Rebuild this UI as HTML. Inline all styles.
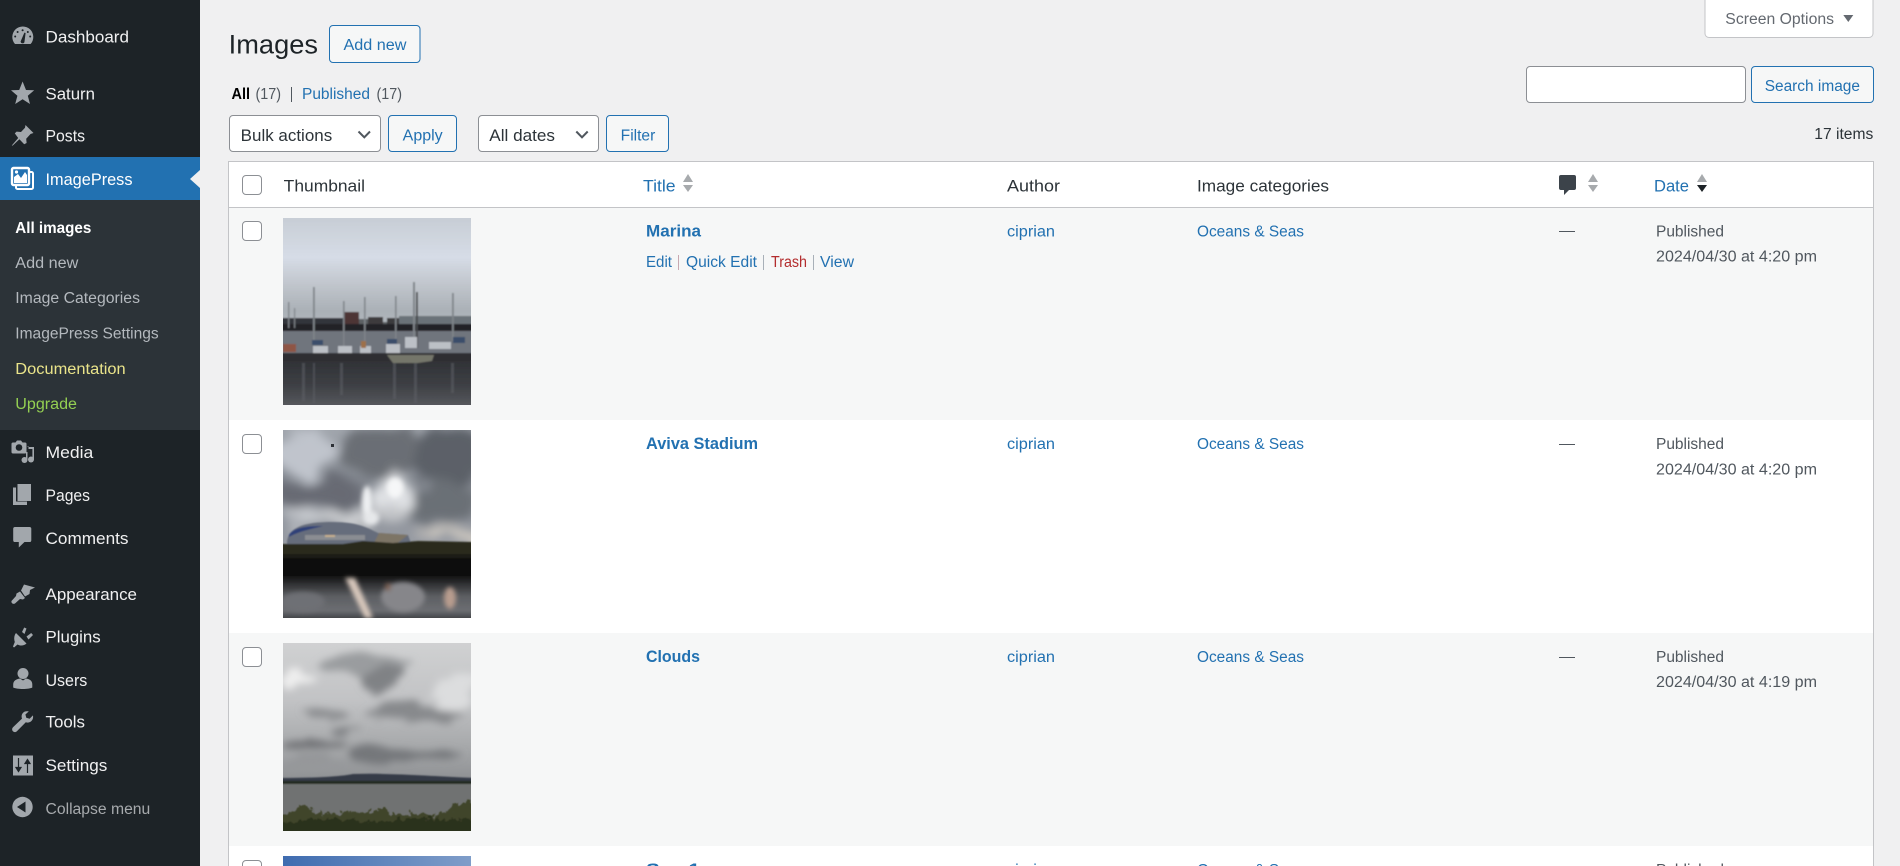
<!DOCTYPE html>
<html lang="en"><head><meta charset="utf-8"><title>Images</title>
<style>
html,body{margin:0;padding:0;width:1900px;height:866px;overflow:hidden;background:#f0f0f1}
svg{display:block;position:absolute;left:0;top:0}
text{font-family:"Liberation Sans",sans-serif;font-size:15.5px;white-space:pre}
.m{fill:#f0f0f1;font-size:16.5px}
.s{fill:#b4b9be;font-size:15.5px}
.l{fill:#2271b1}
.t{fill:#2c3338}
.g{fill:#50575e}
.h{font-size:16.5px}
.b{font-weight:bold}
.ti{fill:#2271b1;font-weight:bold;font-size:16.5px}
.i{fill:#a2a7ac}
</style></head><body>
<svg width="1900" height="866" viewBox="0 0 1900 866" xmlns="http://www.w3.org/2000/svg">
<defs>
<filter id="b1" x="-5%" y="-5%" width="110%" height="110%"><feGaussianBlur stdDeviation="0.8"/></filter>
<filter id="b3" x="-20%" y="-20%" width="140%" height="140%"><feGaussianBlur stdDeviation="2.5"/></filter>
<filter id="cl" x="-30%" y="-30%" width="160%" height="160%"><feTurbulence type="fractalNoise" baseFrequency="0.022 0.04" numOctaves="4" seed="7" result="n"/><feDisplacementMap in="SourceGraphic" in2="n" scale="38" xChannelSelector="R" yChannelSelector="G"/><feGaussianBlur stdDeviation="5"/></filter>
<filter id="cl2" x="-30%" y="-30%" width="160%" height="160%"><feTurbulence type="fractalNoise" baseFrequency="0.02 0.07" numOctaves="4" seed="3" result="n"/><feDisplacementMap in="SourceGraphic" in2="n" scale="26" xChannelSelector="R" yChannelSelector="G"/><feGaussianBlur stdDeviation="4"/></filter>
<filter id="bu" x="-5%" y="-20%" width="110%" height="140%"><feTurbulence type="fractalNoise" baseFrequency="0.16" numOctaves="3" seed="11" result="n"/><feDisplacementMap in="SourceGraphic" in2="n" scale="12" xChannelSelector="R" yChannelSelector="G"/><feGaussianBlur stdDeviation="0.6"/></filter>
<linearGradient id="sky1" x1="0" y1="0" x2="0" y2="1"><stop offset="0" stop-color="#c6ccd4"/><stop offset=".38" stop-color="#d6dce6"/><stop offset=".6" stop-color="#c2c7ce"/><stop offset=".85" stop-color="#aab0b6"/><stop offset="1" stop-color="#b4bac0"/></linearGradient>
<linearGradient id="wat1" x1="0" y1="0" x2="0" y2="1"><stop offset="0" stop-color="#303236"/><stop offset=".5" stop-color="#3d3f44"/><stop offset="1" stop-color="#5a5c60"/></linearGradient>
<linearGradient id="sky2" x1="0" y1="0" x2="0" y2="1"><stop offset="0" stop-color="#a0a5ac"/><stop offset=".4" stop-color="#858a92"/><stop offset="1" stop-color="#989ca4"/></linearGradient>
<linearGradient id="wat2" x1="0" y1="0" x2="0" y2="1"><stop offset="0" stop-color="#131314"/><stop offset=".45" stop-color="#5d5f63"/><stop offset=".75" stop-color="#6b6d71"/><stop offset="1" stop-color="#303135"/></linearGradient>
<linearGradient id="sky3" x1="0" y1="0" x2="0" y2="1"><stop offset="0" stop-color="#d0d1d2"/><stop offset=".4" stop-color="#c2c3c5"/><stop offset=".75" stop-color="#a5a7a9"/><stop offset="1" stop-color="#8b8d90"/></linearGradient>
<linearGradient id="blue" x1="0" y1="0" x2="1" y2="0"><stop offset="0" stop-color="#3f6cb0"/><stop offset="1" stop-color="#7f9dc9"/></linearGradient>
</defs>

<!-- sidebar -->
<rect x="0" y="0" width="200" height="866" fill="#1d2327"/>
<rect x="0" y="157" width="200" height="43" fill="#2271b1"/>
<rect x="0" y="200" width="200" height="230" fill="#2c3338"/>
<polygon points="200,170 190,179 200,188" fill="#f0f0f1"/>

<text class="m" x="45.5" y="42.5" textLength="83.5" lengthAdjust="spacingAndGlyphs">Dashboard</text>
<text class="m" x="45.5" y="99.5" textLength="49.5" lengthAdjust="spacingAndGlyphs">Saturn</text>
<text class="m" x="45.5" y="141.5" textLength="39.5" lengthAdjust="spacingAndGlyphs">Posts</text>
<text class="m" x="45.5" y="185" textLength="87" lengthAdjust="spacingAndGlyphs" style="fill:#fff">ImagePress</text>
<text class="s b" x="15.3" y="233" textLength="76" lengthAdjust="spacingAndGlyphs" style="fill:#fff">All images</text>
<text class="s" x="15.3" y="268" textLength="63" lengthAdjust="spacingAndGlyphs">Add new</text>
<text class="s" x="15.3" y="303" textLength="124.7" lengthAdjust="spacingAndGlyphs">Image Categories</text>
<text class="s" x="15.3" y="338.5" textLength="143.4" lengthAdjust="spacingAndGlyphs">ImagePress Settings</text>
<text class="s" x="15.3" y="374" textLength="110.4" lengthAdjust="spacingAndGlyphs" style="fill:#eae48a">Documentation</text>
<text class="s" x="15.3" y="409" textLength="61.7" lengthAdjust="spacingAndGlyphs" style="fill:#94cf52">Upgrade</text>
<text class="m" x="45.5" y="458" textLength="47.8" lengthAdjust="spacingAndGlyphs">Media</text>
<text class="m" x="45.5" y="501" textLength="44.5" lengthAdjust="spacingAndGlyphs">Pages</text>
<text class="m" x="45.5" y="544" textLength="83" lengthAdjust="spacingAndGlyphs">Comments</text>
<text class="m" x="45.5" y="600" textLength="91.5" lengthAdjust="spacingAndGlyphs">Appearance</text>
<text class="m" x="45.5" y="642.5" textLength="55.2" lengthAdjust="spacingAndGlyphs">Plugins</text>
<text class="m" x="45.5" y="686" textLength="41.8" lengthAdjust="spacingAndGlyphs">Users</text>
<text class="m" x="45.5" y="727.5" textLength="39.5" lengthAdjust="spacingAndGlyphs">Tools</text>
<text class="m" x="45.5" y="771" textLength="61.8" lengthAdjust="spacingAndGlyphs">Settings</text>
<text x="45.5" y="814" textLength="104.8" lengthAdjust="spacingAndGlyphs" style="fill:#a7aaad">Collapse menu</text>

<!-- sidebar icons -->
<path class="i" d="M15 44A10.5 10.5 0 1 1 30.6 44Z"/>
<g fill="#1d2327"><circle cx="22.6" cy="30.2" r="1"/><circle cx="17.6" cy="32" r="1"/><circle cx="27.8" cy="32" r="1"/><circle cx="15.2" cy="36.5" r="1"/><circle cx="30.2" cy="36.5" r="1"/><path d="M20.6 41.5L24.4 32.6 25.6 33 24.4 42.2A2 2 0 0 1 20.6 41.5Z"/></g>
<polygon class="i" points="22.6,81.5 26,90 34.2,90.2 27.8,95.7 30,104 22.6,99.2 15.2,104 17.4,95.7 11,90.2 19.2,90"/>
<path class="i" d="M25.5 125L33.5 133 30.5 134 26.2 138.7 26.6 143 24.2 144.2 19.4 139.2 13 145.3 11.8 146 12.4 144.8 18.2 138 14.8 133.4 16.6 131.6 21 132 25 127.8Z"/>
<rect x="16" y="172" width="17" height="17" rx="1.5" fill="none" stroke="#fff" stroke-width="2"/>
<rect x="12" y="168" width="17" height="17" rx="1.5" fill="#2271b1" stroke="#fff" stroke-width="2.4"/>
<path d="M14 183V177L18 174 21 178 25 172 27 175V183Z" fill="#fff"/><circle cx="16.5" cy="172" r="1.6" fill="#fff"/>

<path class="i" d="M13 442.5H15.5L17 440.5H21L22.5 442.5H25A1.5 1.5 0 0 1 26.5 444V452A1.5 1.5 0 0 1 25 453.5H13A1.5 1.5 0 0 1 11.5 452V444A1.5 1.5 0 0 1 13 442.5Z"/>
<circle cx="19" cy="447.5" r="3.3" fill="#1d2327"/>
<circle cx="24.5" cy="460" r="3" class="i"/><circle cx="31" cy="459.5" r="3" class="i"/>
<path d="M27 447H34V459.5H32.4V449H28.5V446Z M26 452H27.5V460H26Z" class="i"/>
<path class="i" d="M13 487.5H16V501.5H27V505H13Z"/>
<rect class="i" x="17.5" y="484" width="13.5" height="17"/>
<path class="i" d="M15 527H29.5A1.8 1.8 0 0 1 31.3 528.8V540.2A1.8 1.8 0 0 1 29.5 542H24.5L18.8 547.5V542H15A1.8 1.8 0 0 1 13.2 540.2V528.8A1.8 1.8 0 0 1 15 527Z"/>
<path class="i" d="M24 584.5L35 587.5 30 590 29.5 594 25 596.5 21 590.5ZM20 591.5L25 598 23 599.5 20 599 15 603.5C13 604.5 11 603 11.5 601L16 596 16.5 593.5Z"/>
<path class="i" d="M16 633L26.5 643.5C24 646 20 646 17.5 644.5L14 647.5 13 646.5 14.8 642C13.8 639 14 635.5 16 633ZM22 632L24.2 627.5 26.5 628.5 24.5 634ZM26.5 636.5L31.2 633 33 635 28.5 639.5Z"/>
<circle class="i" cx="23" cy="673.5" r="5.5"/>
<path class="i" d="M13.2 684.5C13.2 680.5 16.5 679 20 678.5L23 680.5 26 678.5C29.5 679 32.3 680.5 32.3 684.5V687.5C29 689.5 17 689.5 13.2 687.5Z"/>
<path class="i" d="M27 711.2C24 711 21.5 713.5 21.6 716.6 21.6 717.3 21.8 718 22 718.6L13 727.3C11.6 728.7 12 731 13.6 731.8 14.8 732.4 16 732 16.9 731.2L25.8 722.3C29 723.3 32.4 721.4 33 718 33.2 717 33.1 716.2 32.9 715.4L29.6 718.7 26.3 717.8 25.4 714.5 28.8 711.4C28.2 711.3 27.6 711.2 27 711.2Z"/>
<rect class="i" x="13" y="755.5" width="20" height="20"/>
<path d="M18.5 758V770M16 767.5L18.5 771.5 21 767.5ZM27.5 773V761M25 763.5L27.5 759.5 30 763.5Z" fill="#1d2327" stroke="#1d2327" stroke-width="1.2"/>
<circle class="i" cx="22.5" cy="807" r="10.2"/>
<polygon points="17,807 25.5,801.5 25.5,812.5" fill="#1d2327"/>

<!-- heading -->
<text x="228.7" y="53.3" textLength="89.3" lengthAdjust="spacingAndGlyphs" style="font-size:27px;fill:#1d2327">Images</text>
<rect x="329.5" y="25.5" width="90.5" height="37" rx="3.5" fill="#f6f7f7" stroke="#2271b1"/>
<text class="l" x="343.5" y="50" textLength="63" lengthAdjust="spacingAndGlyphs">Add new</text>

<text class="b" x="231.5" y="99" textLength="18.5" lengthAdjust="spacingAndGlyphs" style="fill:#000">All</text>
<text class="g" x="255.5" y="99" textLength="25.5" lengthAdjust="spacingAndGlyphs">(17)</text>
<rect x="291" y="87" width="1" height="15" fill="#50575e"/>
<text class="l" x="302" y="99" textLength="68" lengthAdjust="spacingAndGlyphs">Published</text>
<text class="g" x="376.5" y="99" textLength="25.5" lengthAdjust="spacingAndGlyphs">(17)</text>

<!-- tablenav -->
<rect x="229.5" y="115.5" width="151" height="36" rx="3.5" fill="#fff" stroke="#8c8f94"/>
<text class="t h" x="240.7" y="141" textLength="91.5" lengthAdjust="spacingAndGlyphs">Bulk actions</text>
<path d="M358.5 131.5L364.3 137.3 370 131.5" fill="none" stroke="#50575e" stroke-width="2"/>
<rect x="388.5" y="115.5" width="68" height="36" rx="3.5" fill="#f6f7f7" stroke="#2271b1"/>
<text class="l" x="402.7" y="140.5" textLength="40" lengthAdjust="spacingAndGlyphs">Apply</text>
<rect x="478.5" y="115.5" width="120" height="36" rx="3.5" fill="#fff" stroke="#8c8f94"/>
<text class="t h" x="489.3" y="141" textLength="65.7" lengthAdjust="spacingAndGlyphs">All dates</text>
<path d="M576.3 131.5L582 137.3 587.7 131.5" fill="none" stroke="#50575e" stroke-width="2"/>
<rect x="606.5" y="115.5" width="62" height="36" rx="3.5" fill="#f6f7f7" stroke="#2271b1"/>
<text class="l" x="620.7" y="140.5" textLength="34.6" lengthAdjust="spacingAndGlyphs">Filter</text>

<rect x="1705" y="-5" width="168" height="42.5" rx="4" fill="#fff" stroke="#c3c4c7"/>
<text x="1725.3" y="24" textLength="108.7" lengthAdjust="spacingAndGlyphs" style="fill:#646970">Screen Options</text>
<polygon points="1843.3,15 1853.3,15 1848.3,22" fill="#646970"/>
<rect x="1526.5" y="66.5" width="219" height="36" rx="3.5" fill="#fff" stroke="#8c8f94"/>
<rect x="1751.5" y="66.5" width="122" height="36" rx="3.5" fill="#f6f7f7" stroke="#2271b1"/>
<text class="l" x="1764.7" y="91" textLength="95.3" lengthAdjust="spacingAndGlyphs">Search image</text>
<text class="t" x="1814.3" y="139" textLength="59" lengthAdjust="spacingAndGlyphs">17 items</text>

<!-- table -->
<rect x="228.5" y="161.5" width="1645" height="720" fill="#fff" stroke="#c3c4c7"/>
<rect x="229" y="207" width="1644" height="1" fill="#c3c4c7"/>
<rect x="229" y="208" width="1644" height="212" fill="#f6f7f7"/>
<rect x="229" y="633" width="1644" height="213" fill="#f6f7f7"/>

<rect x="242.5" y="175.5" width="19" height="19" rx="3.5" fill="#fff" stroke="#8c8f94"/>
<text class="t h" x="283.7" y="191.5" textLength="81.3" lengthAdjust="spacingAndGlyphs">Thumbnail</text>
<text class="l h" x="643" y="191.5" textLength="32.6" lengthAdjust="spacingAndGlyphs">Title</text>
<path d="M683 182L688 174 693 182ZM683 185H693L688 192Z" fill="#a7aaad"/>
<text class="t h" x="1007" y="191.5" textLength="53" lengthAdjust="spacingAndGlyphs">Author</text>
<text class="t h" x="1197" y="191.5" textLength="132" lengthAdjust="spacingAndGlyphs">Image categories</text>
<path d="M1561 175H1574A2 2 0 0 1 1576 177V188A2 2 0 0 1 1574 190H1569L1564 195V190H1561A2 2 0 0 1 1559 188V177A2 2 0 0 1 1561 175Z" fill="#3c434a"/>
<path d="M1588 182L1593 174 1598 182ZM1588 185H1598L1593 192Z" fill="#a7aaad"/>
<text class="l h" x="1654" y="191.5" textLength="35" lengthAdjust="spacingAndGlyphs">Date</text>
<path d="M1697 182L1702 174 1707 182Z" fill="#a7aaad"/><path d="M1697 185H1707L1702 192Z" fill="#1d2327"/>

<!-- row 1 -->
<rect x="242.5" y="221.5" width="19" height="19" rx="3.5" fill="#fff" stroke="#8c8f94"/>
<text class="ti" x="646" y="236.5" textLength="55" lengthAdjust="spacingAndGlyphs">Marina</text>
<text class="l" x="646" y="267" textLength="26" lengthAdjust="spacingAndGlyphs">Edit</text>
<rect x="678" y="255" width="1" height="15" fill="#c8a8b0"/>
<text class="l" x="686" y="267" textLength="71" lengthAdjust="spacingAndGlyphs">Quick Edit</text>
<rect x="763" y="255" width="1" height="15" fill="#a8b0b8"/>
<text x="771" y="267" textLength="36" lengthAdjust="spacingAndGlyphs" style="fill:#b32d2e">Trash</text>
<rect x="813" y="255" width="1" height="15" fill="#a8b0b8"/>
<text class="l" x="820" y="267" textLength="34" lengthAdjust="spacingAndGlyphs">View</text>
<text class="l" x="1007" y="236.5" textLength="48" lengthAdjust="spacingAndGlyphs">ciprian</text>
<text class="l" x="1197" y="236.5" textLength="107" lengthAdjust="spacingAndGlyphs">Oceans &amp; Seas</text>
<rect x="1559" y="231" width="16" height="1" fill="#50575e"/>
<text class="g" x="1656" y="236.5" textLength="68" lengthAdjust="spacingAndGlyphs">Published</text>
<text class="g" x="1656" y="261.5" textLength="161" lengthAdjust="spacingAndGlyphs">2024/04/30 at 4:20 pm</text>

<svg x="283" y="218" width="188" height="187" viewBox="0 0 188 187">
<rect width="188" height="187" fill="#44464a"/>
<g filter="url(#b1)">
<rect x="-4" y="-4" width="196" height="114" fill="url(#sky1)"/>
<rect x="-4" y="100" width="65" height="14" fill="#33363a"/>
<rect x="61" y="94" width="15" height="18" fill="#4d3436"/>
<rect x="76" y="101" width="10" height="11" fill="#5c6064"/>
<rect x="85" y="99" width="15" height="13" fill="#3c3a3c"/>
<rect x="100" y="104" width="6" height="8" fill="#5c6064"/>
<rect x="104" y="100" width="12" height="12" fill="#3a3a3e"/>
<rect x="116" y="98" width="76" height="10" fill="#6a7278"/>
<rect x="-4" y="106" width="196" height="8" fill="#222426"/>
<rect x="-4" y="113" width="196" height="23" fill="#6f747d"/>
<rect x="-4" y="143" width="196" height="48" fill="url(#wat1)"/>
<g fill="#7f8489"><rect x="30" y="69" width="1.8" height="55"/><rect x="60" y="83" width="1.6" height="45"/><rect x="81" y="79" width="1.6" height="50"/><rect x="112" y="78" width="1.6" height="50"/><rect x="130" y="64" width="2" height="58"/><rect x="169" y="75" width="1.8" height="48"/><rect x="5" y="84" width="1.4" height="26"/><rect x="11" y="90" width="1.2" height="20"/></g>
<rect x="133" y="74" width="1.8" height="56" fill="#46484c"/>
<g fill="#bcc0c6"><rect x="30" y="128" width="15" height="7"/><rect x="55" y="128" width="14" height="7"/><rect x="77" y="128" width="11" height="7"/><rect x="103" y="126" width="14" height="9"/><rect x="122" y="119" width="12" height="11"/><rect x="146" y="124" width="22" height="7"/></g>
<g fill="#3a4d6b"><rect x="29" y="122" width="11" height="5"/><rect x="104" y="121" width="10" height="5"/><rect x="170" y="119" width="12" height="6"/></g>
<rect x="0" y="126" width="13" height="8" fill="#8e5544"/><rect x="78" y="123" width="5" height="7" fill="#9e7048"/>
<rect x="-4" y="135" width="196" height="8" fill="#2d2f32"/>
<path d="M104 137H151L149 143 135 145H110Z" fill="#75766a"/>
<g fill="#5e6066" opacity=".55"><rect x="19" y="145" width="3" height="38"/><rect x="30" y="145" width="2" height="40"/><rect x="57" y="145" width="3" height="32"/><rect x="110" y="145" width="3" height="36"/><rect x="131" y="145" width="3" height="40"/><rect x="168" y="145" width="3" height="30"/></g>
</g>
</svg>

<!-- row 2 -->
<rect x="242.5" y="434.5" width="19" height="19" rx="3.5" fill="#fff" stroke="#8c8f94"/>
<text class="ti" x="646" y="449" textLength="112" lengthAdjust="spacingAndGlyphs">Aviva Stadium</text>
<text class="l" x="1007" y="449" textLength="48" lengthAdjust="spacingAndGlyphs">ciprian</text>
<text class="l" x="1197" y="449" textLength="107" lengthAdjust="spacingAndGlyphs">Oceans &amp; Seas</text>
<rect x="1559" y="444" width="16" height="1" fill="#50575e"/>
<text class="g" x="1656" y="449" textLength="68" lengthAdjust="spacingAndGlyphs">Published</text>
<text class="g" x="1656" y="474.5" textLength="161" lengthAdjust="spacingAndGlyphs">2024/04/30 at 4:20 pm</text>

<svg x="283" y="430" width="188" height="188" viewBox="0 0 188 188">
<rect width="188" height="118" fill="url(#sky2)"/>
<g filter="url(#cl)">
<ellipse cx="22" cy="22" rx="34" ry="22" fill="#c0c4cc"/>
<ellipse cx="100" cy="22" rx="40" ry="26" fill="#6a6e75"/>
<ellipse cx="165" cy="28" rx="34" ry="36" fill="#5c6067"/>
<ellipse cx="35" cy="62" rx="50" ry="15" fill="#676b73"/>
<ellipse cx="18" cy="88" rx="28" ry="9" fill="#c4c7cc"/>
<ellipse cx="150" cy="74" rx="45" ry="18" fill="#6b6f76"/>
<ellipse cx="110" cy="68" rx="22" ry="24" fill="#dfe1e4"/>
<ellipse cx="100" cy="86" rx="28" ry="11" fill="#c3c5c8"/>
<ellipse cx="55" cy="86" rx="18" ry="6" fill="#d0d2d4"/>
<ellipse cx="165" cy="106" rx="35" ry="6" fill="#d6cfc4"/>
</g>
<g filter="url(#b3)"><ellipse cx="112" cy="58" rx="8" ry="10" fill="#f6f7f8"/><ellipse cx="84" cy="72" rx="5" ry="16" fill="#eef0f2"/><ellipse cx="88" cy="88" rx="8" ry="7" fill="#e6e8ea"/></g>
<g filter="url(#b1)">
<path d="M4 114C4 96 24 92 50 92 75 92 85 98 95 103L125 105 129 116H4Z" fill="#666d7c"/>
<path d="M6 105C10 98 22 96 40 96 28 99 14 102 6 107Z" fill="#2f4178"/>
<rect x="22" y="105" width="60" height="5" fill="#8a8d92"/><rect x="42" y="105" width="10" height="2" fill="#c7b08e"/>
<path d="M96 103L125 105 112 115H90Z" fill="#7d7466"/>
<rect x="-4" y="118" width="196" height="14" fill="#1b1e14"/>
<path d="M-4 114H60L80 111 110 113 135 111 192 112V124H-4Z" fill="#2a2c1b"/>
<rect x="-4" y="128" width="196" height="22" fill="#0c0c09"/>
<rect x="-4" y="146" width="196" height="46" fill="url(#wat2)"/>
</g>
<g filter="url(#b3)">
<path d="M62 148L82 188H90L72 148Z" fill="#d8c8bc"/>
<ellipse cx="167" cy="168" rx="6" ry="11" fill="#b89c8e"/>
<ellipse cx="120" cy="167" rx="22" ry="15" fill="#86868a"/>
<ellipse cx="105" cy="157" rx="3" ry="4" fill="#7e6050"/>
<ellipse cx="20" cy="172" rx="22" ry="10" fill="#6e7074"/>
</g>
<rect x="48" y="14" width="3" height="3" fill="#2d3036"/>
</svg>

<!-- row 3 -->
<rect x="242.5" y="647.5" width="19" height="19" rx="3.5" fill="#fff" stroke="#8c8f94"/>
<text class="ti" x="646" y="662" textLength="54" lengthAdjust="spacingAndGlyphs">Clouds</text>
<text class="l" x="1007" y="662" textLength="48" lengthAdjust="spacingAndGlyphs">ciprian</text>
<text class="l" x="1197" y="662" textLength="107" lengthAdjust="spacingAndGlyphs">Oceans &amp; Seas</text>
<rect x="1559" y="657" width="16" height="1" fill="#50575e"/>
<text class="g" x="1656" y="662" textLength="68" lengthAdjust="spacingAndGlyphs">Published</text>
<text class="g" x="1656" y="687" textLength="161" lengthAdjust="spacingAndGlyphs">2024/04/30 at 4:19 pm</text>

<svg x="283" y="643" width="188" height="188" viewBox="0 0 188 188">
<rect width="188" height="142" fill="url(#sky3)"/>
<g filter="url(#cl2)">
<ellipse cx="85" cy="22" rx="42" ry="11" fill="#9a9c9f"/>
<ellipse cx="100" cy="36" rx="18" ry="13" fill="#808285"/>
<ellipse cx="15" cy="38" rx="16" ry="9" fill="#eeeeee"/>
<ellipse cx="40" cy="72" rx="22" ry="6" fill="#8a8c8f"/>
<ellipse cx="130" cy="70" rx="50" ry="9" fill="#87898c"/>
<ellipse cx="62" cy="88" rx="12" ry="4" fill="#808285"/>
<ellipse cx="28" cy="104" rx="32" ry="7" fill="#6f7174"/>
<ellipse cx="120" cy="110" rx="55" ry="7" fill="#75777a"/>
<ellipse cx="30" cy="122" rx="42" ry="5" fill="#95979a"/>
<ellipse cx="170" cy="48" rx="20" ry="16" fill="#dcddde"/>
</g>
<g filter="url(#b1)">
<path d="M-4 135C40 135 60 133 70 131 100 130 130 132 192 135V141H-4Z" fill="#353b47"/>
<rect x="-4" y="138" width="196" height="3" fill="#23291f"/>
<rect x="-4" y="141" width="196" height="51" fill="#6f7272"/>
</g>
<g filter="url(#bu)">
<path d="M-6 172L10 170 20 162 30 168 50 172 65 168 80 170 98 166 110 172 130 170 150 174 165 168 178 158 194 158V194H-6Z" fill="#3f4429"/>
<path d="M-6 180L40 176 90 178 140 175 194 176V194H-6Z" fill="#2c301e"/>
</g>
</svg>

<!-- row 4 -->
<rect x="242.5" y="860.5" width="19" height="19" rx="3.5" fill="#fff" stroke="#8c8f94"/>
<rect x="283" y="856" width="188" height="20" fill="url(#blue)"/>
<text class="ti" x="646" y="875" textLength="54" lengthAdjust="spacingAndGlyphs">Sea 1</text>
<text class="l" x="1007" y="875" textLength="48" lengthAdjust="spacingAndGlyphs">ciprian</text>
<text class="l" x="1197" y="875" textLength="107" lengthAdjust="spacingAndGlyphs">Oceans &amp; Seas</text>
<text class="g" x="1656" y="875" textLength="68" lengthAdjust="spacingAndGlyphs">Published</text>
</svg>
</body></html>
